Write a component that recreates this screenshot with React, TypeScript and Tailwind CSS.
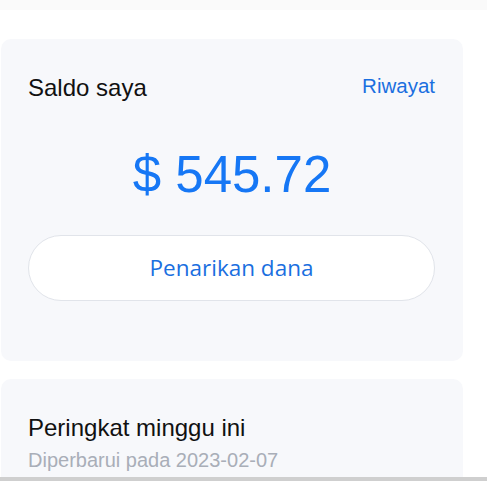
import React from "react";

export default function App() {
  return (
    <div className="relative w-[487px] h-[481px] overflow-hidden bg-white" style={{ fontFamily: '"Liberation Sans", Arial, sans-serif' }}>
      <div className="h-[10px] bg-[#fafafa]" />
      <div className="pt-[29px] pl-[1px]">
        <div className="w-[462px] h-[322px] rounded-[10px] bg-[#f7f8fb] px-[27px] pt-[35px]">
          <div className="flex items-start justify-between">
            <div className="text-[24px] leading-[28px] text-[#111]">Saldo saya</div>
            <div className="text-[20.5px] leading-[24px] text-[#1a6fe0] mr-[1px]">Riwayat</div>
          </div>
          <div className="mt-[43px] text-center text-[51px] leading-[60px] text-[#1677f5]">$ 545.72</div>
          <button
            className="mt-[30px] w-[407px] h-[66px] rounded-full bg-white border border-[#e1e4ea] text-[22.5px] text-[#1a6fe0]"
            style={{ fontFamily: '"Open Sans", sans-serif' }}
          >
            Penarikan dana
          </button>
        </div>
        <div className="mt-[18px] w-[462px] h-[200px] rounded-[10px] bg-[#f7f8fb] px-[27px] pt-[35px]">
          <div className="text-[24px] leading-[28px] text-[#111]">Peringkat minggu ini</div>
          <div className="mt-[6px] text-[20px] leading-[24px] text-[#a9aeb8]">Diperbarui pada 2023-02-07</div>
        </div>
      </div>
      <div className="fixed left-0 bottom-0 w-full h-[4px] bg-[#cfcfcf]" />
    </div>
  );
}
